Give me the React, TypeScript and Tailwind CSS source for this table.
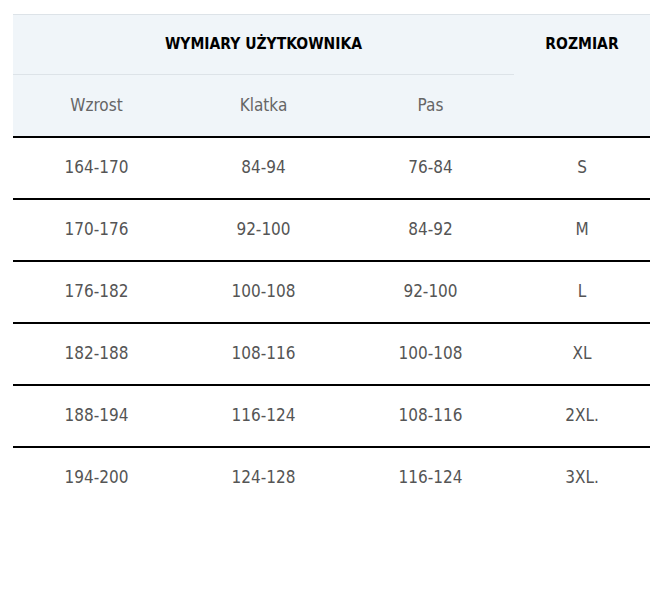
const rows = [
  ["164-170", "84-94", "76-84", "S"],
  ["170-176", "92-100", "84-92", "M"],
  ["176-182", "100-108", "92-100", "L"],
  ["182-188", "108-116", "100-108", "XL"],
  ["188-194", "116-124", "108-116", "2XL."],
  ["194-200", "124-128", "116-124", "3XL."],
];

export default function App() {
  return (
    <div className="min-h-screen bg-white pt-[14px] pl-[13px] font-['DejaVu_Sans_Condensed','DejaVu_Sans',sans-serif]">
      <div className="w-[637px]">
        {/* Header */}
        <div className="bg-[#f0f5f9] border-t border-[#dde3e8] grid grid-cols-[501px_136px]">
          <div>
            <div className="h-[60px] flex items-center justify-center border-b border-[#dde3e8] text-[15.5px] font-bold text-black">
              WYMIARY UŻYTKOWNIKA
            </div>
            <div className="h-[61px] grid grid-cols-3 text-[17px] text-[#666]">
              <div className="flex items-center justify-center">Wzrost</div>
              <div className="flex items-center justify-center">Klatka</div>
              <div className="flex items-center justify-center">Pas</div>
            </div>
          </div>
          <div className="h-[60px] flex items-center justify-center text-[15.5px] font-bold text-black">
            ROZMIAR
          </div>
        </div>
        {/* Body */}
        {rows.map((r, i) => (
          <div
            key={i}
            className="h-[62px] grid grid-cols-[167px_167px_167px_136px] text-[17px] text-[#555] border-t-2 border-black"
          >
            {r.map((c, j) => (
              <div key={j} className="flex items-center justify-center">
                {c}
              </div>
            ))}
          </div>
        ))}
      </div>
    </div>
  );
}
